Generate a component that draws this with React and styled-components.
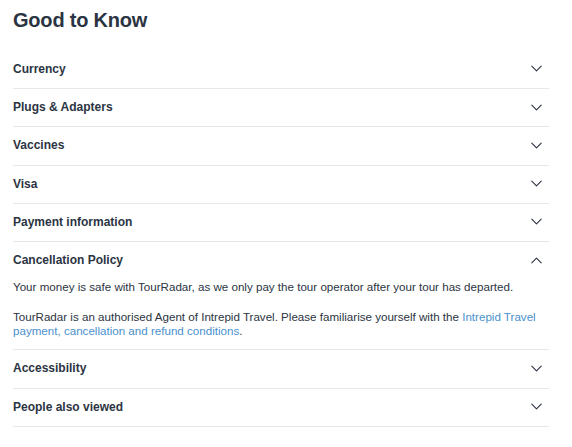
import React from "react";
import styled, { createGlobalStyle } from "styled-components";

const Global = createGlobalStyle`
  html, body { margin: 0; padding: 0; background: #fff; }
  body { font-family: "Liberation Sans", Arial, Helvetica, sans-serif; color: #2b3442; }
`;

const Page = styled.div`
  padding: 0 23px 0 13px;
`;

const Title = styled.h2`
  margin: 8px 0 18.75px;
  font-size: 20px;
  line-height: 24px;
  font-weight: 700;
  color: #2b3442;
  letter-spacing: -0.2px;
`;

const List = styled.div`
  display: flex;
  flex-direction: column;
`;

const Item = styled.div`
  border-bottom: 1px solid #e6e8eb;
`;

const Header = styled.div`
  display: flex;
  align-items: center;
  justify-content: space-between;
  padding: 11px 7px 12.25px 0;
  height: 14px;
`;

const Label = styled.span`
  font-size: 12px;
  line-height: 14px;
  font-weight: 700;
  color: #2b3442;
`;

const Body = styled.div`
  padding: 1px 0 11px;
  display: flex;
  flex-direction: column;
  gap: 16px;
`;

const Para = styled.p`
  margin: 0;
  font-size: 11.6px;
  line-height: 14px;
  color: #2b3442;
`;

const Link = styled.a`
  color: #4a90cc;
  text-decoration: none;
`;

const Chevron = ({ up }) => (
  <svg width="11" height="7" viewBox="0 0 11 7" fill="none">
    <path
      d={up ? "M0.8 5.8 L5.5 1.2 L10.2 5.8" : "M0.8 1.2 L5.5 5.8 L10.2 1.2"}
      stroke="#2b3442"
      strokeWidth="1.1"
      strokeLinecap="round"
      strokeLinejoin="round"
    />
  </svg>
);

const items = [
  "Currency",
  "Plugs & Adapters",
  "Vaccines",
  "Visa",
  "Payment information",
  "Cancellation Policy",
  "Accessibility",
  "People also viewed",
];

export default function App() {
  return (
    <>
      <Global />
      <Page>
        <Title>Good to Know</Title>
        <List>
          {items.map((label) => {
            const open = label === "Cancellation Policy";
            return (
              <Item key={label}>
                <Header>
                  <Label>{label}</Label>
                  <Chevron up={open} />
                </Header>
                {open && (
                  <Body>
                    <Para>
                      Your money is safe with TourRadar, as we only pay the tour operator after your tour has departed.
                    </Para>
                    <Para>
                      TourRadar is an authorised Agent of Intrepid Travel. Please familiarise yourself with the{" "}
                      <Link href="#">Intrepid Travel payment, cancellation and refund conditions</Link>.
                    </Para>
                  </Body>
                )}
              </Item>
            );
          })}
        </List>
      </Page>
    </>
  );
}
